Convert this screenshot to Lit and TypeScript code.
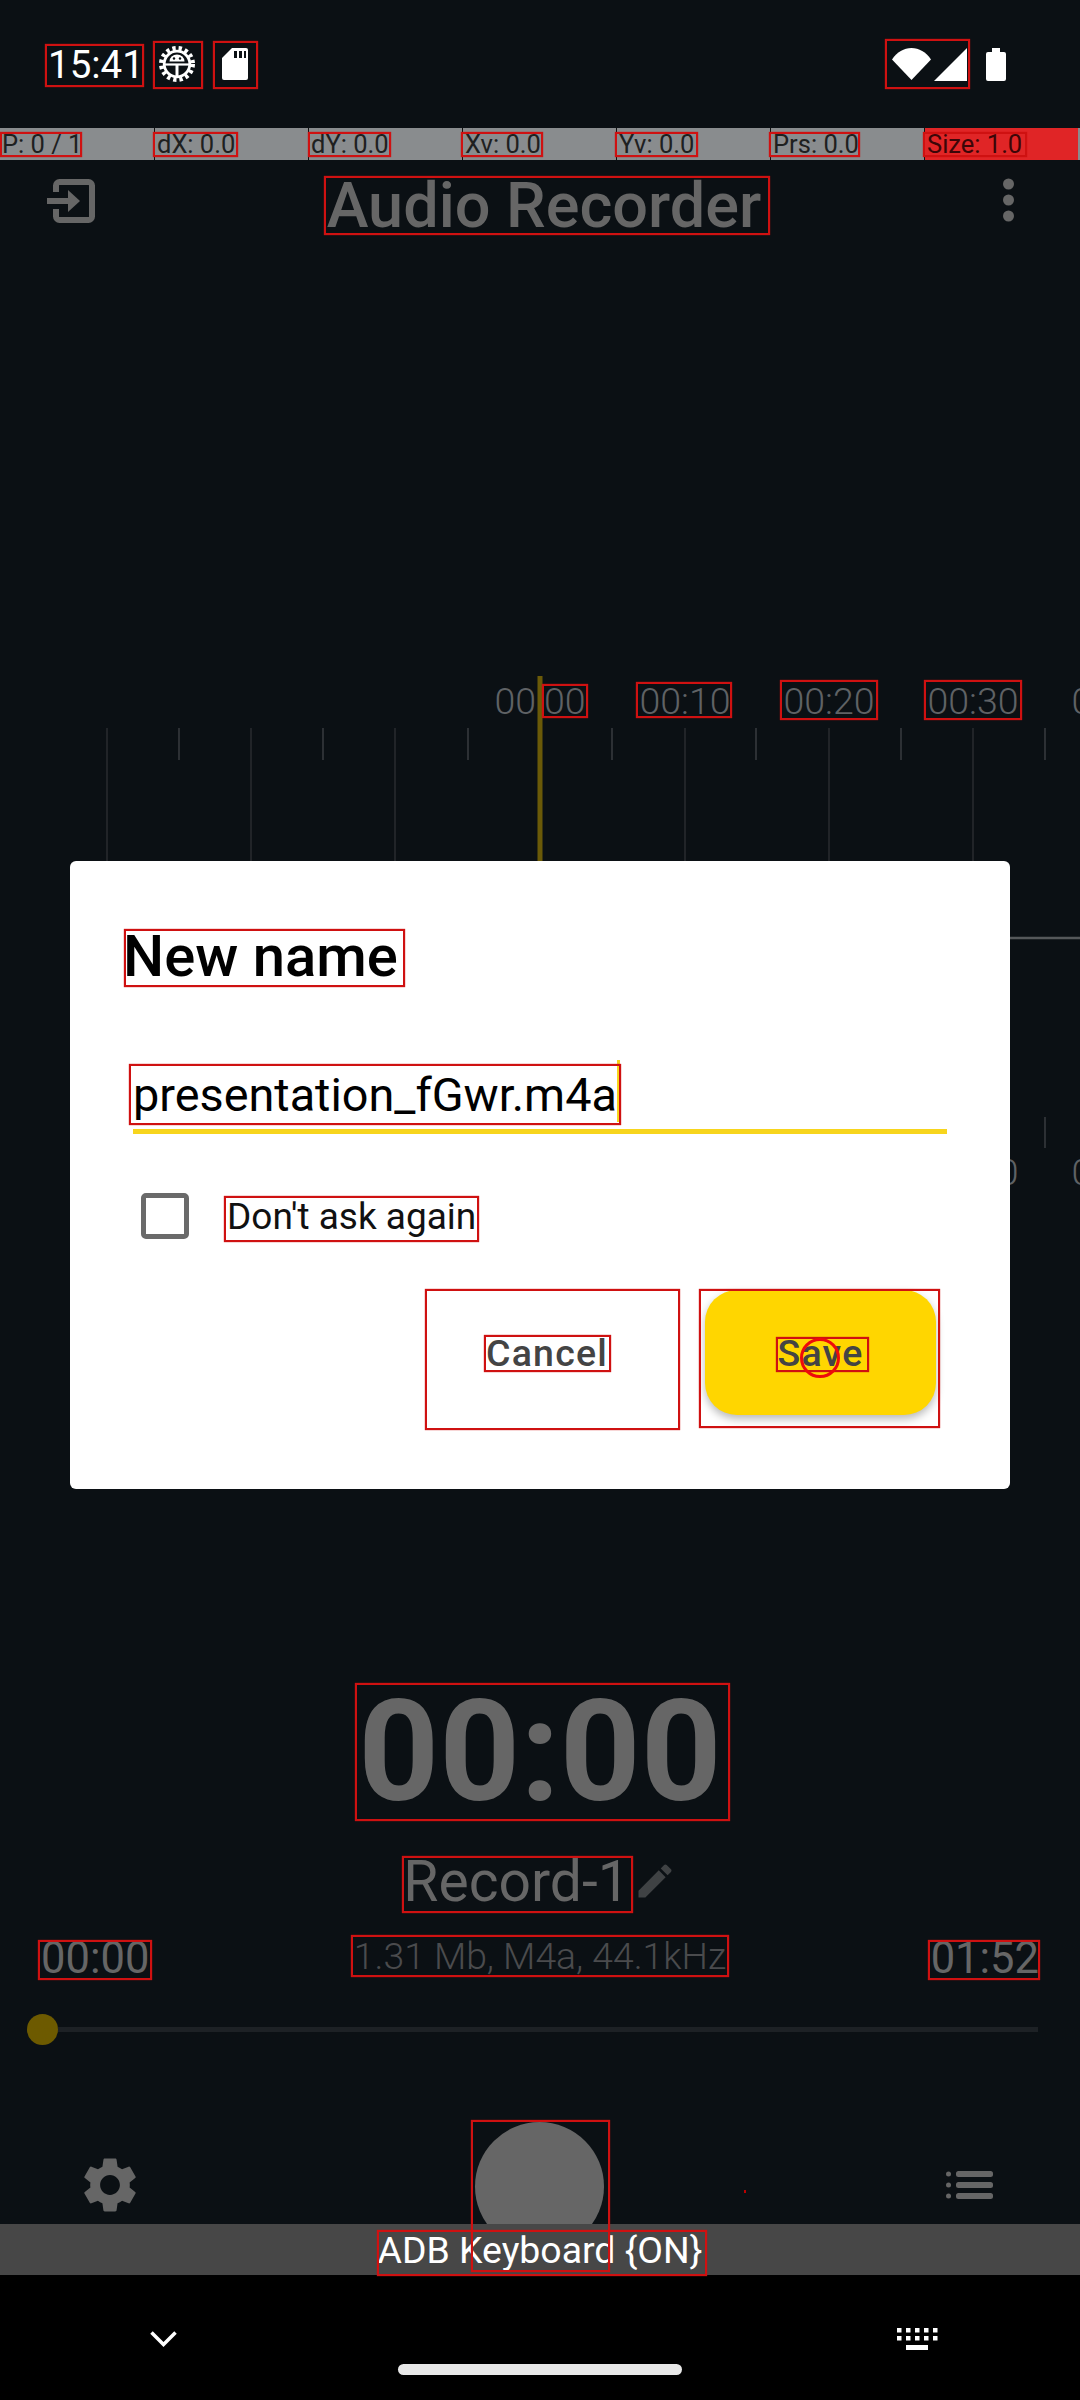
import { LitElement, css, html, svg } from "lit";
import { customElement } from "lit/decorators.js";

// [x, y, w, h] of the red debug outlines that sit on top of the capture
const OUTLINES: number[][] = [
  [45, 44, 99, 43], [153, 41, 50, 48], [213, 41, 45, 48], [885, 39, 85, 50],
  [0, 132, 82, 25], [153, 132, 85, 25], [308, 132, 83, 25], [461, 132, 82, 25],
  [615, 132, 83, 25], [769, 132, 91, 25], [923, 132, 104, 25],
  [324, 176, 446, 59],
  [542, 684, 46, 34], [636, 682, 96, 36], [780, 680, 98, 40], [924, 680, 98, 40],
  [124, 929, 281, 58], [129, 1064, 492, 61], [224, 1196, 255, 46],
  [425, 1289, 255, 141], [484, 1335, 127, 37],
  [699, 1289, 241, 139], [776, 1337, 93, 35],
  [355, 1683, 375, 138], [402, 1856, 231, 57], [351, 1935, 378, 42],
  [38, 1940, 114, 40], [928, 1940, 112, 40],
  [471, 2120, 139, 152], [377, 2230, 330, 46],
];

const POINTER = ["P: 0 / 1", "dX: 0.0", "dY: 0.0", "Xv: 0.0", "Yv: 0.0", "Prs: 0.0", "Size: 1.0"];
const MAJOR = [107, 251, 395, 685, 829, 973];
const MINOR = [179, 323, 468, 612, 756, 901, 1045];
const LABELS: [number, string][] = [[540, "00:00"], [685, "00:10"], [829, "00:20"], [973, "00:30"], [1117, "00:40"]];

@customElement("app-root")
export class AppRoot extends LitElement {
  static styles = css`
    :host {
      display: block;
      width: 1080px;
      height: 2400px;
      position: relative;
      overflow: hidden;
      font-family: Roboto, "Liberation Sans", sans-serif;
      background: #0b1014;
    }

    .screen {
      display: flex;
      flex-direction: column;
      height: 2400px;
    }

    svg {
      display: block;
      flex: none;
    }

    /* status bar */
    .status {
      display: flex;
      align-items: center;
      height: 128px;
      padding: 0 74px 0 48px;
      color: #fff;
    }

    .clock {
      width: 111px;
      font-size: 38.5px;
    }

    .sd {
      margin-left: 27px;
    }

    .wifi {
      margin-left: auto;
    }

    .signal {
      margin-left: 3px;
    }

    .battery {
      margin-left: 19px;
    }

    /* pointer location strip */
    .pointer {
      display: grid;
      grid-template-columns: repeat(7, 154px);
      height: 32px;
      background: #898c8e;
      color: #1e2020;
      font-size: 25.5px;
      line-height: 32px;
    }

    .pointer span {
      padding-left: 2px;
      border-left: 1px solid #111;
    }

    .pointer span:first-child {
      border-left: 0;
    }

    .pointer .hot {
      background: #e02526;
      color: #3c0608;
    }

    /* app bar */
    .appbar {
      display: flex;
      align-items: center;
      justify-content: space-between;
      height: 88px;
      padding: 0 66px 0 47px;
      color: #666;
    }

    .appbar svg {
      margin-bottom: 6px;
    }

    .appbar .dots {
      margin-bottom: 8px;
    }

    .title {
      margin: 2px 10px 0 0;
      font-size: 63px;
      font-weight: 500;
    }

    .wave {
      margin-top: 412px;
    }

    /* timer block */
    .timer {
      margin-top: 483px;
      height: 138px;
      line-height: 138px;
      text-align: center;
      font-size: 141px;
      font-weight: 700;
      color: #666;
    }

    .name {
      display: flex;
      justify-content: center;
      align-items: center;
      margin-top: 32px;
      height: 57px;
      font-size: 57px;
      color: #666;
    }

    .name svg {
      margin: 0 0 2px 3px;
    }

    .meta {
      display: flex;
      justify-content: space-between;
      align-items: flex-start;
      margin-top: 27px;
      height: 56px;
      padding: 0 41px;
      font-size: 43.5px;
      line-height: 44px;
      color: #666;
    }

    .meta .info {
      font-size: 37.3px;
      line-height: 38px;
      font-weight: 300;
      color: #4a4b4d;
    }

    .slider {
      display: flex;
      align-items: center;
      height: 31px;
      margin-top: 21px;
      padding-left: 27px;
    }

    .thumb {
      width: 31px;
      height: 31px;
      border-radius: 50%;
      background: #6d5a00;
    }

    .track {
      width: 980px;
      height: 5px;
      background: #1d2125;
    }

    /* bottom controls, the toast clips the record button */
    .controls {
      display: flex;
      align-items: flex-start;
      height: 103px;
      margin-top: 76px;
      padding: 0 87px 0 77px;
      overflow: hidden;
    }

    .settings {
      margin-top: 31px;
    }

    .record {
      flex: none;
      width: 129px;
      height: 129px;
      margin: 1px 0 0 332px;
      border-radius: 50%;
      background: #666;
    }

    .list {
      margin: 50px 0 0 auto;
    }

    .toast {
      height: 51px;
      line-height: 53px;
      text-align: center;
      font-size: 37.4px;
      color: #fff;
      background: #474747;
    }

    /* navigation bar */
    .nav {
      flex: 1;
      background: #000;
    }

    .nav-row {
      display: flex;
      justify-content: space-between;
      align-items: center;
      height: 22px;
      margin-top: 53px;
      padding: 0 142px 0 150px;
    }

    .pill {
      width: 284px;
      height: 11px;
      margin: 14px auto 0;
      border-radius: 6px;
      background: #e8e8e8;
    }

    /* dialog */
    .dialog {
      position: absolute;
      top: 861px;
      left: 70px;
      width: 940px;
      height: 628px;
      display: flex;
      flex-direction: column;
      border-radius: 6px;
      background: #fff;
    }

    .dialog h2 {
      margin: 66px 0 0 53px;
      height: 58px;
      font-size: 58px;
      line-height: 58px;
      font-weight: 500;
      color: #000;
    }

    .field {
      display: flex;
      align-items: flex-start;
      margin: 75px 0 0 63px;
      width: 814px;
      height: 74px;
      border-bottom: 5px solid #f7d51d;
      box-sizing: border-box;
    }

    .field span {
      margin-top: 6px;
      font-size: 46.8px;
      line-height: 58px;
      color: #000;
    }

    .caret {
      width: 3px;
      height: 62px;
      background: #f7d51d;
    }

    .check {
      display: flex;
      align-items: center;
      margin: 57px 0 0 71px;
      height: 50px;
      font-size: 37px;
      color: #111;
    }

    .box {
      box-sizing: border-box;
      width: 48px;
      height: 46px;
      margin-right: 38px;
      border: 5px solid #6a6a6a;
      border-radius: 5px;
    }

    .actions {
      display: flex;
      gap: 36px;
      margin: 49px 0 0 355px;
    }

    .actions div {
      display: flex;
      align-items: center;
      justify-content: center;
      height: 125px;
      font-size: 37.5px;
      font-weight: 500;
      letter-spacing: 1.2px;
      color: #444;
    }

    .cancel {
      width: 244px;
    }

    .actions .save {
      width: 231px;
      border-radius: 32px;
      background: #ffd600;
      box-shadow: 0 4px 8px rgba(0, 0, 0, 0.28);
    }

    /* debug overlay */
    .outline {
      position: absolute;
      box-sizing: border-box;
      border: 2px solid #cf1111;
      box-shadow: 0 0 1px #cf1111;
    }

    .touch {
      position: absolute;
      left: 800px;
      top: 1338px;
      width: 40px;
      height: 40px;
      box-sizing: border-box;
      border: 3px solid #ee0b0b;
      border-radius: 50%;
    }

    .speck {
      position: absolute;
      left: 744px;
      top: 2190px;
      width: 2px;
      height: 3px;
      background: #b00;
    }
  `;

  renderStatus() {
    return html`
      <div class="status">
        <span class="clock">15:41</span>
        <svg width="36" height="36" viewBox="0 0 36 36">
          <circle cx="18" cy="18" r="15.8" fill="none" stroke="#fff" stroke-width="4.4" stroke-dasharray="3.3 3"/>
          <circle cx="18" cy="18" r="12.8" fill="none" stroke="#fff" stroke-width="2.8"/>
          <path d="M10.5 15.5a7.5 7 0 0 1 15 0z" fill="#fff"/>
          <circle cx="15" cy="12.5" r="1.2" fill="#0b1014"/>
          <circle cx="21" cy="12.5" r="1.2" fill="#0b1014"/>
          <path d="M6 18.5h24" stroke="#fff" stroke-width="2.2"/>
          <path d="M18 18v13" stroke="#fff" stroke-width="3"/>
        </svg>
        <svg class="sd" width="26" height="32" viewBox="0 0 26 32">
          <path d="M10 0h14a2 2 0 0 1 2 2v28a2 2 0 0 1-2 2H2a2 2 0 0 1-2-2V10z" fill="#fff"/>
          <path d="M12 3h3v7h-3zM17 3h3v7h-3zM22 3h2v7h-2z" fill="#0b1014"/>
        </svg>
        <svg class="wifi" width="39" height="32" viewBox="0 0 39 32">
          <path d="M0 11.5C5 4 12 0 19.5 0S34 4 39 11.5L19.5 32z" fill="#fff"/>
        </svg>
        <svg class="signal" width="33" height="33" viewBox="0 0 33 33">
          <path d="M33 0v33H0z" fill="#fff"/>
        </svg>
        <svg class="battery" width="20" height="33" viewBox="0 0 20 33">
          <path d="M6 0h8v4h4a2 2 0 0 1 2 2v25a2 2 0 0 1-2 2H2a2 2 0 0 1-2-2V6a2 2 0 0 1 2-2h4z" fill="#fff"/>
        </svg>
      </div>
    `;
  }

  renderWave() {
    const dy = 660;
    return html`
      <svg class="wave" width="1080" height="540" viewBox="0 ${dy} 1080 540">
        ${MAJOR.map((x) => svg`<line x1=${x} x2=${x} y1="728" y2="1148" stroke="#2b2e31" stroke-width="1.4"/>`)}
        ${MINOR.map((x) => svg`
          <line x1=${x} x2=${x} y1="728" y2="760" stroke="#3c3f42" stroke-width="1.4"/>
          <line x1=${x} x2=${x} y1="1117" y2="1148" stroke="#3c3f42" stroke-width="1.4"/>
        `)}
        ${LABELS.map(([x, t]) => svg`
          <text x=${x} y="714" text-anchor="middle" font-size="37.5" font-weight="300" fill="#5f6265">${t}</text>
          <text x=${x} y="1185" text-anchor="middle" font-size="37.5" font-weight="300" fill="#5f6265">${t}</text>
        `)}
        <line x1="540" x2="1080" y1="938" y2="938" stroke="#55585a" stroke-width="2.4"/>
        <rect x="537.5" y="676" width="5" height="524" fill="#6b5a08"/>
      </svg>
    `;
  }

  renderDialog() {
    return html`
      <div class="dialog">
        <h2>New name</h2>
        <div class="field">
          <span>presentation_fGwr.m4a</span>
          <i class="caret"></i>
        </div>
        <div class="check"><i class="box"></i>Don't ask again</div>
        <div class="actions">
          <div class="cancel">Cancel</div>
          <div class="save">Save</div>
        </div>
      </div>
    `;
  }

  render() {
    return html`
      <div class="screen">
        ${this.renderStatus()}
        <div class="pointer">
          ${POINTER.map((t, i) => html`<span class=${i === 6 ? "hot" : ""}>${t}</span>`)}
        </div>
        <div class="appbar">
          <svg width="48" height="44" viewBox="0 0 48 44" fill="none" stroke="#666" stroke-width="6">
            <path d="M9 13V6.5A3.5 3.5 0 0 1 12.5 3h29A3.5 3.5 0 0 1 45 6.5v31a3.5 3.5 0 0 1-3.5 3.5h-29A3.5 3.5 0 0 1 9 37.5V30"/>
            <path d="M0 22h22" />
            <path d="M21 11l12 11-12 11z" fill="#666" stroke="none"/>
          </svg>
          <span class="title">Audio Recorder</span>
          <svg class="dots" width="11" height="44" viewBox="0 0 11 44" fill="#666">
            <circle cx="5.5" cy="6" r="5.5"/>
            <circle cx="5.5" cy="22" r="5.5"/>
            <circle cx="5.5" cy="38" r="5.5"/>
          </svg>
        </div>
        ${this.renderWave()}
        <div class="timer">00:00</div>
        <div class="name">
          <span>Record-1</span>
          <svg width="44" height="44" viewBox="0 0 24 24" fill="#3f4244">
            <path d="M3 17.25V21h3.75L17.81 9.94l-3.75-3.75L3 17.25zM20.71 7.04c.39-.39.39-1.02 0-1.41l-2.34-2.34c-.39-.39-1.02-.39-1.41 0l-1.83 1.83 3.75 3.75 1.83-1.83z"/>
          </svg>
        </div>
        <div class="meta">
          <span>00:00</span>
          <span class="info">1.31 Mb, M4a, 44.1kHz</span>
          <span>01:52</span>
        </div>
        <div class="slider"><i class="thumb"></i><i class="track"></i></div>
        <div class="controls">
          <svg class="settings" width="66" height="66" viewBox="0 0 24 24" fill="#666">
            <path d="M19.14 12.94c.04-.3.06-.61.06-.94 0-.32-.02-.64-.07-.94l2.03-1.58c.18-.14.23-.41.12-.61l-1.92-3.32c-.12-.22-.37-.29-.59-.22l-2.39.96c-.5-.38-1.03-.7-1.62-.94l-.36-2.54c-.04-.24-.24-.41-.48-.41h-3.84c-.24 0-.43.17-.47.41l-.36 2.54c-.59.24-1.13.57-1.62.94l-2.39-.96c-.22-.08-.47 0-.59.22L2.74 8.87c-.12.21-.08.47.12.61l2.03 1.58c-.05.3-.09.63-.09.94s.02.64.07.94l-2.03 1.58c-.18.14-.23.41-.12.61l1.92 3.32c.12.22.37.29.59.22l2.39-.96c.5.38 1.03.7 1.62.94l.36 2.54c.05.24.24.41.48.41h3.84c.24 0 .44-.17.47-.41l.36-2.54c.59-.24 1.13-.56 1.62-.94l2.39.96c.22.08.47 0 .59-.22l1.92-3.32c.12-.22.07-.47-.12-.61l-2.01-1.58zM12 15.6c-1.98 0-3.6-1.62-3.6-3.6s1.62-3.6 3.6-3.6 3.6 1.62 3.6 3.6-1.62 3.6-3.6 3.6z"/>
          </svg>
          <i class="record"></i>
          <svg class="list" width="47" height="28" viewBox="0 0 47 28" fill="#666">
            <circle cx="2.5" cy="3" r="2.5"/><rect x="10" width="37" height="6" rx="2.5"/>
            <circle cx="2.5" cy="14" r="2.5"/><rect x="10" y="11" width="37" height="6" rx="2.5"/>
            <circle cx="2.5" cy="25" r="2.5"/><rect x="10" y="22" width="37" height="6" rx="2.5"/>
          </svg>
        </div>
        <div class="toast">ADB Keyboard {ON}</div>
        <div class="nav">
          <div class="nav-row">
            <svg width="27" height="16" viewBox="0 0 27 16" fill="none" stroke="#fff" stroke-width="3.5">
              <path d="M1.5 1.5L13.5 13.5L25.5 1.5"/>
            </svg>
            <svg width="41" height="22" viewBox="0 0 41 22" fill="#fff">
              ${[0, 9, 18, 27, 36].map((x) => svg`
                <rect x=${x} y="0" width="4.5" height="4.5"/>
                <rect x=${x} y="8" width="4.5" height="4.5"/>
              `)}
              <rect x="9" y="17" width="22" height="5"/>
            </svg>
          </div>
          <div class="pill"></div>
        </div>
      </div>
      ${this.renderDialog()}
      ${OUTLINES.map(([x, y, w, h]) => html`
        <div class="outline" style="left:${x}px;top:${y}px;width:${w}px;height:${h}px"></div>
      `)}
      <div class="touch"></div>
      <div class="speck"></div>
    `;
  }
}
